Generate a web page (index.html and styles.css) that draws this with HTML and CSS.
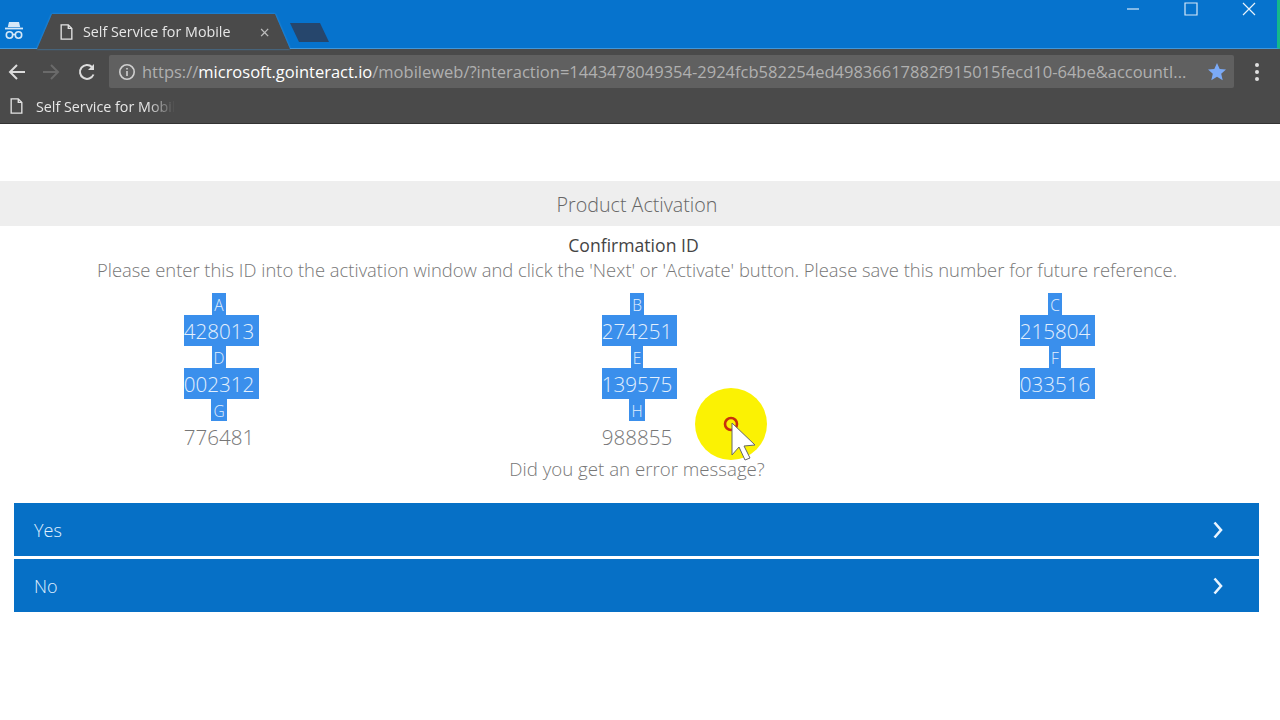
FILE: index.html
```html
<!DOCTYPE html>
<html lang="en">
<head>
    <meta charset="UTF-8">
    <title>Self Service for Mobile</title>
    <link rel="stylesheet" href="styles.css">
</head>
<body>

<div class="browser">
    <!-- tabs -->
    <div class="tabstrip">
        <svg class="incognito" width="22" height="22" viewBox="0 0 22 22" fill="none" stroke="#d5e8f8" stroke-width="1.6">
            <path d="M6 3h10l1.2 5H4.800z" fill="#d5e8f8" stroke="none"/>
            <path d="M2 9.500h18" stroke-width="1.800"/>
            <circle cx="6.500" cy="16" r="3.200"/>
            <circle cx="15.500" cy="16" r="3.200"/>
            <path d="M9.700 15.500h2.600"/>
        </svg>
        <div class="tab-wrap">
            <div class="tab">
                <svg class="page-icon" width="13" height="16" viewBox="0 0 14 18" fill="none" stroke="#e4e4e4" stroke-width="1.500">
                    <path d="M1 1h8l4 4v12H1z"/>
                    <path d="M9 1v4h4"/>
                </svg>
                <span class="tab-title">Self Service for Mobile</span>
                <span class="tab-close">&#215;</span>
            </div>
        </div>
        <div class="new-tab"></div>
        <div class="window-controls">
            <svg width="14" height="14" viewBox="0 0 14 14" stroke="#d5e8f8" fill="none" stroke-width="1.200"><path d="M1 7h12"/></svg>
            <svg width="14" height="14" viewBox="0 0 14 14" stroke="#d5e8f8" fill="none" stroke-width="1.200"><path d="M1 1h12v12H1z"/></svg>
            <svg width="14" height="14" viewBox="0 0 14 14" stroke="#e8f3fb" fill="none" stroke-width="1.200"><path d="M1 1l12 12M13 1L1 13"/></svg>
        </div>
    </div>

    <!-- address bar -->
    <div class="toolbar">
        <svg width="18" height="18" viewBox="0 0 18 18" fill="none" stroke="#dcdcdc" stroke-width="2"><path d="M17 9H2M9 2L2 9l7 7"/></svg>
        <svg class="fwd" width="18" height="18" viewBox="0 0 18 18" fill="none" stroke="#6a6a6a" stroke-width="2"><path d="M1 9h15M9 2l7 7-7 7"/></svg>
        <svg class="reload" width="18" height="18" viewBox="0 0 18 18" fill="none" stroke="#dcdcdc" stroke-width="2"><path d="M15.500 11.500A7 7 0 1 1 14 4"/><path d="M16 1v6h-6z" fill="#dcdcdc" stroke="none"/></svg>
        <div class="omnibox">
            <svg width="18" height="18" viewBox="0 0 18 18" fill="none" stroke="#d0d0d0" stroke-width="1.600"><circle cx="9" cy="9" r="7.200"/><path d="M9 8v5M9 5v1.600"/></svg>
            <div class="url"><span class="url-dim">https://</span><span class="url-host">microsoft.gointeract.io</span><span class="url-dim">/mobileweb/?interaction=1443478049354-2924fcb582254ed49836617882f915015fecd10-64be&amp;accountI...</span></div>
            <svg width="20" height="20" viewBox="0 0 20 20"><path d="M10 1l2.700 6 6.300.6-4.800 4.200 1.500 6.400L10 14.800l-5.700 3.400 1.500-6.400L1 7.600 7.300 7z" fill="#7baaf7"/></svg>
        </div>
        <div class="menu-dots"><i></i><i></i><i></i></div>
    </div>

    <!-- bookmarks -->
    <div class="bookmarks">
        <svg width="13" height="16" viewBox="0 0 14 18" fill="none" stroke="#e4e4e4" stroke-width="1.500">
            <path d="M1 1h8l4 4v12H1z"/>
            <path d="M9 1v4h4"/>
        </svg>
        <span class="bookmark-title">Self Service for Mobil</span>
    </div>
</div>

<div class="page">
    <div class="banner">Product Activation</div>
    <div class="heading">Confirmation ID</div>
    <p class="intro">Please enter this ID into the activation window and click the 'Next' or 'Activate' button. Please save this number for future reference.</p>

    <div class="id-grid">
        <div class="id-cell"><span class="id-label sel">A</span><span class="id-value sel">428013</span></div>
        <div class="id-cell"><span class="id-label sel">B</span><span class="id-value sel">274251</span></div>
        <div class="id-cell"><span class="id-label sel">C</span><span class="id-value sel">215804</span></div>
        <div class="id-cell"><span class="id-label sel">D</span><span class="id-value sel">002312</span></div>
        <div class="id-cell"><span class="id-label sel">E</span><span class="id-value sel">139575</span></div>
        <div class="id-cell"><span class="id-label sel">F</span><span class="id-value sel">033516</span></div>
        <div class="id-cell"><span class="id-label sel">G</span><span class="id-value">776481</span></div>
        <div class="id-cell"><span class="id-label sel">H</span><span class="id-value">988855</span></div>
    </div>

    <p class="question">Did you get an error message?</p>

    <div class="answers">
        <div class="answer"><span>Yes</span><svg width="12" height="18" viewBox="0 0 12 18" fill="none" stroke="#e8f4ff" stroke-width="2.600"><path d="M2.500 1.500L9 9l-6.500 7.500"/></svg></div>
        <div class="answer"><span>No</span><svg width="12" height="18" viewBox="0 0 12 18" fill="none" stroke="#e8f4ff" stroke-width="2.600"><path d="M2.500 1.500L9 9l-6.500 7.500"/></svg></div>
    </div>
</div>

<!-- mouse highlight from the recording -->
<svg class="pointer" width="80" height="80" viewBox="0 0 80 80">
    <circle cx="36" cy="37" r="36" fill="#fbf203"/>
    <circle cx="36" cy="37" r="6" fill="none" stroke="#c8300c" stroke-width="2.600"/>
    <path d="M37 36v32l7-8 6 13 5-2-6-12 11-1z" fill="#fff" stroke="#666" stroke-width="1"/>
</svg>

</body>
</html>
```

FILE: styles.css
```css
body {
    margin: 0;
    background-color: #fff;
    font-family: 'Open Sans', sans-serif;
    overflow: hidden;
}

/* browser window */
.browser {
    background-color: #4a4a4a;
    color: #e6e6e6;
}
.tabstrip {
    display: flex;
    height: 48px;
    background-color: #0673cd;
    border-bottom: 1px solid #3f97dc;
    border-right: 3px solid #14b98a;
}
.incognito {
    margin: 19px 0 0 3px;
}
.tab-wrap {
    margin: 14px 0 0 12px;
    height: 35px;
    filter: drop-shadow(0 0 1px #3f97dc);
}
.tab {
    display: flex;
    align-items: center;
    width: 253px;
    height: 35px;
    background-color: #4a4a4a;
    clip-path: polygon(0 100%, 15px 0, 238px 0, 100% 100%);
}
.page-icon {
    margin-left: 23px;
}
.tab-title {
    margin-left: 10px;
    font-size: 14.3px;
    white-space: nowrap;
}
.tab-close {
    margin-left: 29px;
    font-size: 18px;
    color: #bdbdbd;
}
.new-tab {
    width: 39px;
    height: 19px;
    margin: 23px 0 0 0;
    background-color: #26466c;
    clip-path: polygon(0 0, 30px 0, 100% 100%, 9px 100%);
}
.window-controls {
    display: flex;
    gap: 44px;
    margin-left: auto;
    padding: 2px 21px 0 0;
}
.toolbar {
    display: flex;
    align-items: center;
    height: 40px;
    padding: 5px 21px 0 8px;
    box-sizing: border-box;
}
.fwd {
    margin-left: 16px;
}
.reload {
    margin: 0 13px 0 18px;
}
.omnibox {
    display: flex;
    align-items: center;
    flex: 1;
    height: 33px;
    padding: 0 7px 0 9px;
    box-sizing: border-box;
    background-color: #606060;
    border-radius: 2px;
}
.url {
    flex: 1;
    margin-left: 6px;
    font-size: 16.5px;
    white-space: nowrap;
    overflow: hidden;
}
.url-dim {
    color: #b0b0b0;
}
.url-host {
    color: #fff;
}
.menu-dots {
    display: flex;
    flex-direction: column;
    gap: 3px;
    margin-left: 21px;
}
.menu-dots i {
    width: 4px;
    height: 4px;
    border-radius: 50%;
    background-color: #e0e0e0;
}
.bookmarks {
    display: flex;
    align-items: center;
    height: 34px;
    padding-left: 10px;
    border-bottom: 1px solid #333;
}
.bookmark-title {
    margin-left: 13px;
    font-size: 14.3px;
    white-space: nowrap;
    -webkit-mask-image: linear-gradient(to right, #000 80%, transparent);
    mask-image: linear-gradient(to right, #000 80%, transparent);
}

/* page */
.page {
    padding-top: 57px;
    color: #777;
    font-weight: 300;
    text-align: center;
}
.banner {
    height: 45px;
    padding-right: 6px;
    line-height: 47px;
    background-color: #eeeeee;
    color: #666;
    font-size: 19.7px;
}
.heading {
    margin-top: 8px;
    padding-right: 13px;
    color: #444;
    font-size: 17.6px;
    font-weight: 400;
    line-height: 23px;
}
.intro {
    margin: 0;
    padding-right: 6px;
    font-size: 18.4px;
    line-height: 26px;
}
.id-grid {
    display: grid;
    grid-template-columns: repeat(3, 418px);
    margin: 10px 0 0 10px;
}
.id-cell {
    display: flex;
    flex-direction: column;
    align-items: center;
}
.id-label {
    height: 22px;
    padding: 0 2px;
    font-size: 15.5px;
    line-height: 24px;
}
/* selection runs past the digits, it takes the trailing space with it */
.id-value {
    height: 31px;
    padding-right: 5px;
    margin-right: -5px;
    font-size: 20.6px;
    line-height: 33px;
}
.sel {
    background-color: #3a8fec;
    color: #e4f0fd;
}
.question {
    margin: 2px 0 0;
    padding-right: 6px;
    font-size: 18.7px;
    line-height: 30px;
}
.answers {
    display: flex;
    flex-direction: column;
    gap: 3px;
    margin: 19px 21px 0 14px;
}
.answer {
    display: flex;
    align-items: center;
    justify-content: space-between;
    height: 53px;
    padding: 0 35px 0 20px;
    background-color: #0670c6;
    color: #e0f0ff;
    font-size: 18px;
}

/* mouse highlight */
.pointer {
    position: absolute;
    left: 695px;
    top: 387px;
}
```
